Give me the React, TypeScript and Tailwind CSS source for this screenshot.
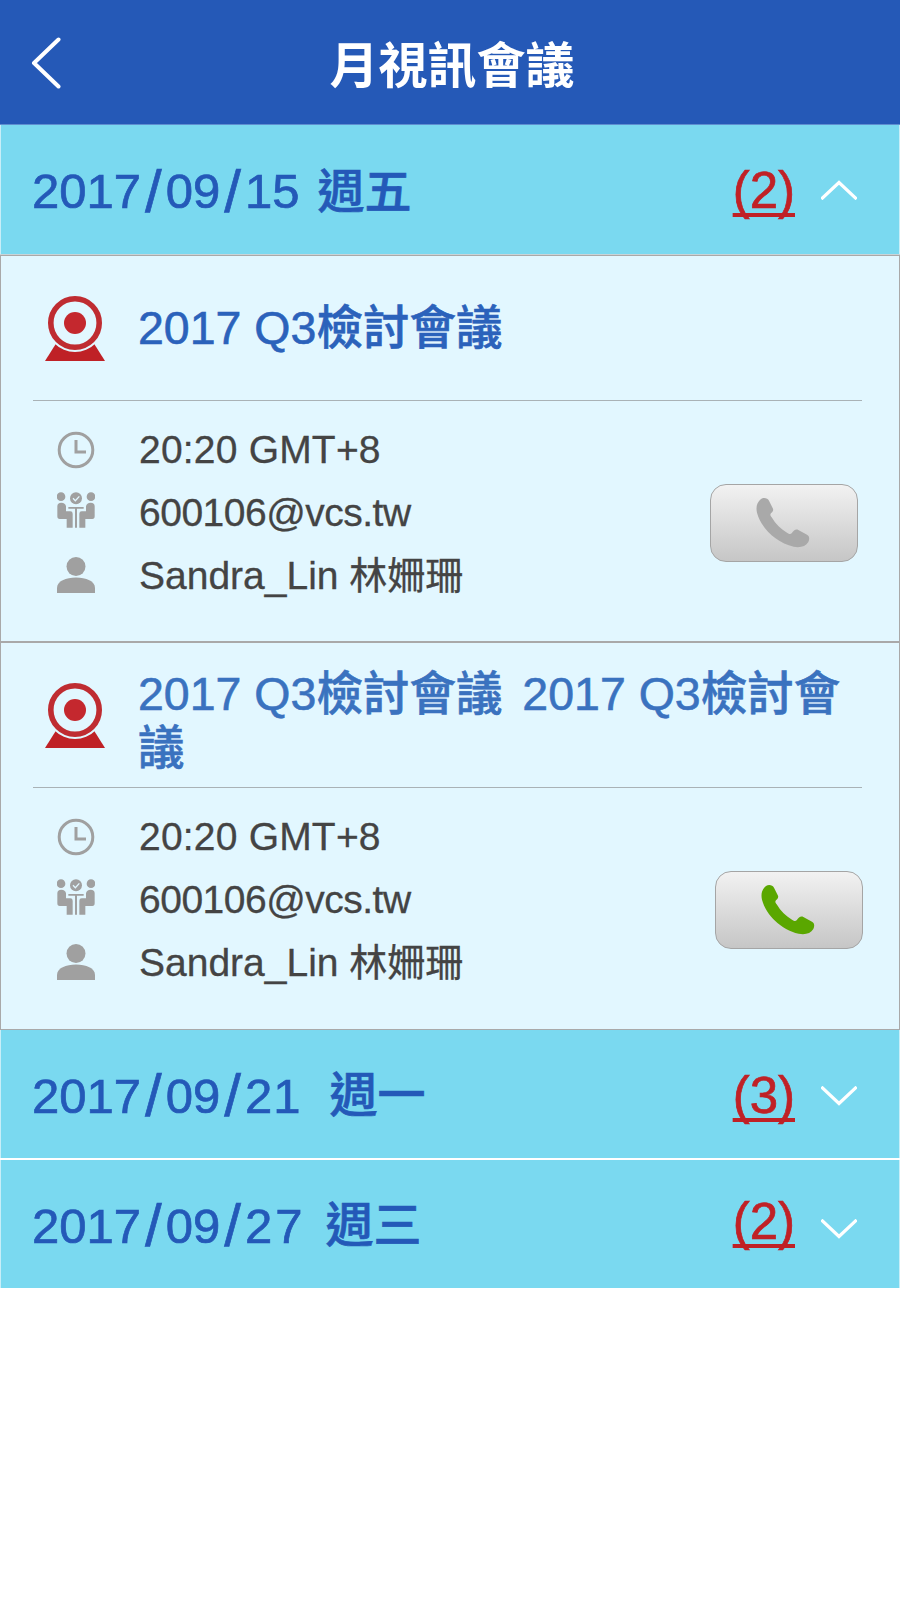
import React from "react";

const latin = "font-['Liberation_Sans','Noto_Sans_CJK_TC',sans-serif]";

function Phone({ color }: { color: string }) {
  return (
    <svg width="54" height="50" viewBox="0 0 160 150" fill={color} className="-ml-[3px] -mt-[1px]">
      <path d="M14 3C22-2 34 0 38 8L50 32C52 38 48 42 44 46C40 50 43 54 46 58C58 78 72 92 92 104C98 108 102 110 106 106C112 98 118 92 126 96L152 110C160 114 160 124 156 132C148 146 130 150 112 146C60 134 14 90 2 44C-2 28 2 12 14 3Z" />
    </svg>
  );
}

function Webcam() {
  return (
    <svg width="60" height="65" viewBox="0 0 60 65">
      <path d="M12 46H48L60 65H0Z" fill="#bf2126" />
      <circle cx="30" cy="27" r="29" fill="#e2f7ff" />
      <circle cx="30" cy="27" r="24.2" fill="none" stroke="#bf2c31" strokeWidth="5.6" />
      <circle cx="30" cy="27" r="11" fill="#c4282e" />
    </svg>
  );
}

function Clock() {
  return (
    <svg width="38" height="38" viewBox="0 0 38 38" fill="none" stroke="#a0a0a0">
      <circle cx="19" cy="19" r="16.8" strokeWidth="3" />
      <path d="M19 9V21H29" strokeWidth="3" />
    </svg>
  );
}

function People() {
  return (
    <svg width="39" height="36" viewBox="0 0 114 106" fill="#a0a0a0" className="-mt-[6px]">
      <circle cx="12" cy="13" r="13" />
      <circle cx="102" cy="13" r="13" />
      <circle cx="57" cy="18" r="18" />
      <path d="M48 18L55 25L67 12" fill="none" stroke="#e2f7ff" strokeWidth="4" />
      <path d="M1 42Q1 31 13 31Q25 31 27 42V57H40Q47 57 47 64V106H29V80H8Q1 80 1 72Z" />
      <path d="M113 42Q113 31 101 31Q89 31 87 42V57H74Q67 57 67 64V106H85V80H106Q113 80 113 72Z" />
      <path d="M34 44H80V49H60V106H54V49H34Z" />
    </svg>
  );
}

function Person() {
  return (
    <svg width="38" height="36" viewBox="0 0 38 36" fill="#a0a0a0" className="-mt-[2px]">
      <circle cx="19" cy="9.5" r="9.5" />
      <path d="M0 36V31C0 24 9 20.5 19 20.5C29 20.5 38 24 38 31V36Z" />
    </svg>
  );
}

function Chevron({ up, className }: { up?: boolean; className?: string }) {
  return (
    <svg width="36" height="20" viewBox="0 0 36 20" fill="none" stroke="#fff" strokeWidth="3.2" strokeLinecap="square" className={className}>
      <path d={up ? "M1.5 18L18 2.5L34.5 18" : "M1.5 2L18 17.5L34.5 2"} />
    </svg>
  );
}

function DateRow({
  parts,
  day,
  dayClass,
  lastClass,
  count,
  up,
  height,
  countPad,
  chevPad,
}: {
  parts: string[];
  day: string;
  dayClass: string;
  lastClass?: string;
  count: string;
  up?: boolean;
  height: string;
  countPad: string;
  chevPad?: string;
}) {
  return (
    <div className={`${height} shrink-0 bg-[#7ad9f0] border-x border-[#c8eef8] flex items-center pl-[31px] pr-[42px] ${latin}`}>
      <div className="flex items-center text-[49px] text-[#2459b8] font-medium leading-none [-webkit-text-stroke-width:0.7px] pt-[4px]">
        <span>{parts[0]}</span>
        <span className="mx-[4px] text-[60px]">/</span>
        <span>{parts[1]}</span>
        <span className="mx-[4px] text-[60px]">/</span>
        <span className={lastClass}>{parts[2]}</span>
        <span className={dayClass}>{day}</span>
      </div>
      <span className={`ml-auto text-[51px] leading-none text-[#c02126] underline decoration-[4px] underline-offset-[5px] [text-decoration-skip-ink:none] [-webkit-text-stroke-width:0.7px] ${countPad}`}>{count}</span>
      <Chevron up={up} className={`ml-[26px] ${chevPad ?? ""}`} />
    </div>
  );
}

function Card({ title, active, buttonPad, color, height, titleShift }: { title: React.ReactNode; active?: boolean; buttonPad: string; color: string; height: string; titleShift?: string }) {
  return (
    <div className={`${height} shrink-0 bg-[#e2f7ff] border border-[#a9a9a9] flex flex-col ${latin}`}>
      <div className="h-[144px] shrink-0 flex items-center pl-[44px] pr-[36px]">
        <div className="shrink-0 w-[60px]">
          <Webcam />
        </div>
        <div className={`ml-[33px] text-[46.5px] leading-[54px] font-medium [-webkit-text-stroke-width:0.6px] ${color} ${titleShift ?? ""}`}>{title}</div>
      </div>
      <div className="ml-[32px] mr-[37px] h-px shrink-0 bg-[#a9b2b6]" />
      <div className={`flex-1 flex items-start ${buttonPad}`}>
        <div className="flex-1 flex flex-col pt-[17px] pl-[56px] text-[39px] leading-[63px] text-[#444444] [-webkit-text-stroke-width:0.3px]">
          <div className="flex items-center">
            <span className="w-[38px] flex justify-center"><Clock /></span>
            <span className="ml-[44px] tracking-[0.2px]">20:20 GMT+8</span>
          </div>
          <div className="flex items-center">
            <span className="w-[38px] flex justify-center"><People /></span>
            <span className="ml-[44px] tracking-[-0.5px]">600106@vcs.tw</span>
          </div>
          <div className="flex items-center">
            <span className="w-[38px] flex justify-center"><Person /></span>
            <span className="ml-[44px]">Sandra_Lin <span className="text-[38px]">林姍珊</span></span>
          </div>
        </div>
        <div className="mt-[83px] w-[148px] h-[78px] rounded-[16px] border border-[#a5a5a5] bg-gradient-to-b from-[#f2f2f2] to-[#c6c6c6] flex items-center justify-center">
          <Phone color={active ? "#5aa700" : "#a9a9a9"} />
        </div>
      </div>
    </div>
  );
}

export default function App() {
  return (
    <div className="w-[900px] h-[1600px] bg-white flex flex-col">
      <header className={`h-[125px] shrink-0 bg-[#2559b7] flex items-center justify-center relative border-b border-[#5f8fd0] ${latin}`}>
        <svg width="30" height="52" viewBox="0 0 30 52" fill="none" stroke="#fff" strokeWidth="4" strokeLinecap="round" strokeLinejoin="round" className="absolute left-[31px] top-[37px]">
          <path d="M27.5 2.5L3 26L27.5 49.5" />
        </svg>
        <h1 className="text-[49px] font-bold text-white leading-none ml-[4px] pt-[8px]">月視訊會議</h1>
      </header>
      <DateRow parts={["2017", "09", "15"]} day="週五" dayClass="text-[47px] ml-[18px]" count="(2)" up height="h-[129px]" countPad="pt-[2px]" />
      <div className="h-px shrink-0 bg-[#c8d4d8]" />
      <Card title="2017 Q3檢討會議" buttonPad="pr-[41px]" color="text-[#2b62bb]" height="h-[387px]" />
      <Card
        title={<>2017 Q3檢討會議 <span className="ml-[7px]">2017 Q3檢討會議</span></>}
        active
        buttonPad="pr-[36px]"
        color="text-[#3a72bf]"
        height="h-[388px]"
        titleShift="mt-[12px]"
      />
      <DateRow parts={["2017", "09", "21"]} day="週一" dayClass="text-[48px] ml-[28px]" lastClass="tracking-[1px]" count="(3)" height="h-[128px]" countPad="pt-[2px]" chevPad="mt-[4px]" />
      <div className="h-[2px] shrink-0" />
      <DateRow parts={["2017", "09", "27"]} day="週三" dayClass="text-[48px] ml-[20px]" lastClass="tracking-[3px]" count="(2)" height="h-[128px]" countPad="pb-[6px]" chevPad="mt-[10px]" />
    </div>
  );
}
